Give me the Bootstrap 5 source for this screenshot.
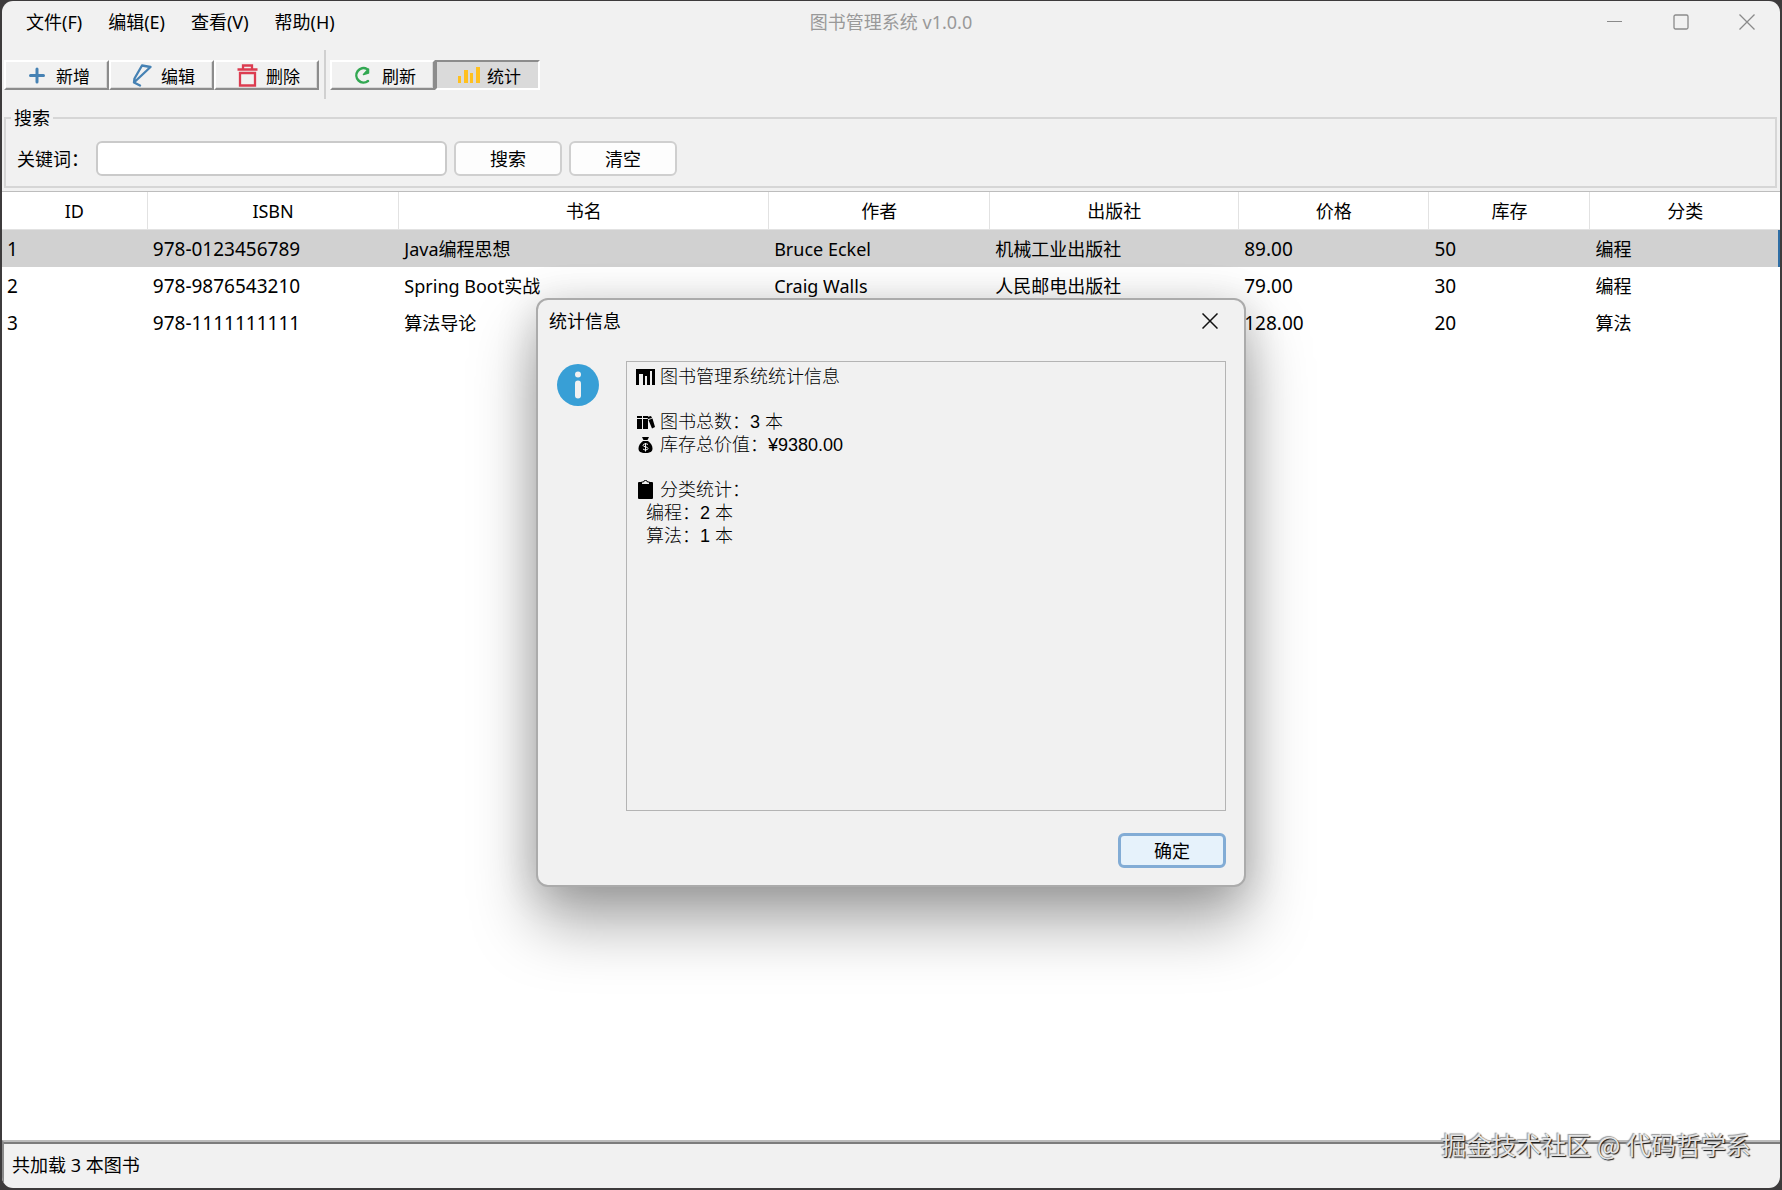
<!DOCTYPE html>
<html lang="zh-CN">
<head>
<meta charset="utf-8">
<meta name="viewport" content="width=device-width, initial-scale=1">
<title>图书管理系统 v1.0.0</title>
<link href="https://cdn.jsdelivr.net/npm/bootstrap@5.3.0/dist/css/bootstrap.min.css" rel="stylesheet">
<style>
  body { font-family: "Noto Sans", "Noto Sans CJK SC", sans-serif; font-size: 18px; line-height: 24px; color: #000; background: #3d3b3c; padding: 1px 2px 2px; }
  .app-window { background: #f1f1f1; border-radius: 11px; overflow: hidden; }
  .title-bar { height: 42px; }
  .bar-side { flex: 1 1 0; }
  .menu-links { gap: 26px; }
  .menu-links a { color: #000; text-decoration: none; }
  .menu-links a:first-child { margin-left: 24px; }
  .app-title { color: #999; }
  .win-ctl { width: 66px; height: 40px; border: 0; background: none; padding: 0; color: #8a8a8a; }
  .win-ctl svg, .dlg-close svg { display: block; margin: auto; }
  .tool-bar { height: 63px; padding: 0 2px; }
  .tool-btn { width: 105px; height: 30px; padding: 0 0 0 19px; gap: 7px; font-size: 17px; line-height: 22px; color: #000; background: #f1f1f1; border: 2px solid; border-color: #fff #8c8c8c #8c8c8c #fff; box-shadow: inset -1px -1px 0 #d8d8d8; }
  .tool-btn span { padding-top: 4px; }
  .tool-btn.pressed { background: #dadada; border-color: #8c8c8c #fff #fff #8c8c8c; box-shadow: none; }
  .tool-sep { width: 2px; height: 49px; background: #d0d0d0; margin: 0 4px 0 5px; }
  .search-box { border: 2px solid #d6d6d6; margin: 0 3px 3px 2px; padding: 11px 11px 10px; }
  .search-box legend { float: none; width: auto; font-size: 18px; line-height: 24px; margin: 0 0 0 -6px; padding: 0 3px; }
  .search-row { gap: 7px; }
  .search-row label { width: 72px; white-space: nowrap; }
  .search-row input { width: 351px; height: 35px; border: 2px solid #cacaca; border-radius: 6px; background: #fff; padding: 0 8px; }
  .plain-btn { width: 108px; height: 35px; border: 2px solid #cfcfcf; border-radius: 6px; background: #fdfdfd; padding: 0; color: #000; }
  .table-area { background: #fff; border-top: 1px solid #bdbdbd; }
  .book-grid { width: 100%; table-layout: fixed; border-collapse: separate; border-spacing: 0; }
  .book-grid th { height: 38px; padding: 0; font-weight: 400; text-align: center; border-right: 1px solid #e2e2e2; border-bottom: 1px solid #e2e2e2; }
  .book-grid th:last-child { border-right: 0; }
  .book-grid td { height: 37px; padding: 0 5px; white-space: nowrap; }
  .book-grid .num { font-size: 19px; }
  .book-grid .chosen td { background: #d1d1d1; }
  .book-grid .chosen td:last-child { border-right: 2px solid #2f6ea5; }
  .status-bar { height: 48px; border-top: 2px solid #bcbcbc; border-left: 2px solid #8a8a8a; box-shadow: inset 0 2px 0 #7c7c7c; padding: 0 8px; }
  .dlg { left: 50%; top: 298px; width: 710px; transform: translateX(-50%); background: #f1f1f1; border: 2px solid #ababab; border-radius: 12px; box-shadow: 0 36px 64px rgba(0,0,0,.34), 0 4px 40px rgba(0,0,0,.16); padding: 0 18px 17px 19px; }
  .dlg-head { height: 42px; margin-left: -8px; }
  .dlg-close { width: 32px; height: 32px; border: 0; background: none; padding: 0; }
  .dlg-body { gap: 27px; padding-top: 19px; }
  .info-mark { margin-top: 3px; }
  .info-text { height: 450px; border: 1px solid #b4b4b4; padding: 4px 9px; font-family: "Liberation Sans", "Noto Sans CJK SC", sans-serif; font-weight: 300; }
  .info-text p { height: 23px; line-height: 23px; margin: 0; display: flex; align-items: center; white-space: pre; }
  .info-text svg { margin: 0 5px 2px 0; }
  .blank-row { height: 22px; }
  .ok-btn { width: 108px; height: 35px; border: 3px solid #82acd5; border-radius: 6px; background: #e6f2fb; padding: 0; color: #000; margin-top: 22px; }
  .credit { right: 31px; bottom: 30px; font-family: "Noto Sans CJK SC", sans-serif; font-size: 25px; line-height: 32px; color: #e4e4e4; text-shadow: 1px 1px 1px #111, -1px -1px 1px #999; }
</style>
</head>
<body class="vh-100 d-flex flex-column position-relative">
<div class="app-window flex-grow-1 d-flex flex-column">
  <header class="title-bar d-flex align-items-center">
    <nav class="menu-links bar-side d-flex">
      <a href="#">文件(F)</a><a href="#">编辑(E)</a><a href="#">查看(V)</a><a href="#">帮助(H)</a>
    </nav>
    <div class="app-title">图书管理系统 v1.0.0</div>
    <div class="bar-side d-flex justify-content-end">
      <button class="win-ctl" type="button" aria-label="最小化"><svg width="16" height="16" fill="none" stroke="currentColor"><path d="M0 7.500H15"/></svg></button>
      <button class="win-ctl" type="button" aria-label="最大化"><svg width="16" height="16" fill="none" stroke="currentColor" stroke-width="1.300"><rect x="1" y="1" width="14" height="14" rx="1.500"/></svg></button>
      <button class="win-ctl" type="button" aria-label="关闭"><svg width="16" height="16" fill="none" stroke="currentColor" stroke-width="1.300"><path d="M.5.5l15 15M15.500.5l-15 15"/></svg></button>
    </div>
  </header>

  <div class="tool-bar d-flex align-items-center" role="toolbar">
    <button class="tool-btn d-flex align-items-center" type="button"><svg width="24" height="24" stroke="#4682b4" stroke-width="3" stroke-linecap="round"><path d="M12 6v13M5.500 12.500h13"/></svg><span>新增</span></button>
    <button class="tool-btn d-flex align-items-center" type="button"><svg width="24" height="24" fill="none" stroke="#4682b4" stroke-width="2.300" stroke-linejoin="round" stroke-linecap="round"><path d="M12 2.500L20.500 4 4 19.500 4.500 15.500zM4 19.500l6 3"/></svg><span>编辑</span></button>
    <button class="tool-btn d-flex align-items-center" type="button"><svg width="24" height="24" fill="none" stroke="#dc3c50" stroke-width="2.300"><path d="M2.500 6.500h20M8 6V2.500h9V6M5 10h15v12.500H5z"/></svg><span>删除</span></button>
    <div class="tool-sep"></div>
    <button class="tool-btn d-flex align-items-center" type="button"><svg width="24" height="24" fill="none" stroke="#32a852" stroke-width="2.500" stroke-linecap="round"><path d="M17 18A7.200 7.200 0 1 1 16 6"/><path d="M17.500 6v4l-5 1.500z" fill="#32a852" stroke-width="1.500" stroke-linejoin="round"/></svg><span>刷新</span></button>
    <button class="tool-btn pressed d-flex align-items-center" type="button"><svg width="24" height="24" fill="#ffc01e"><rect x="2" y="13" width="3" height="7"/><rect x="8" y="7" width="4" height="13"/><rect x="14" y="10" width="3" height="10"/><rect x="20" y="4" width="4" height="16"/></svg><span>统计</span></button>
  </div>

  <fieldset class="search-box">
    <legend>搜索</legend>
    <div class="search-row d-flex align-items-center">
      <label for="kw">关键词：</label>
      <input id="kw" type="text">
      <button class="plain-btn" type="button">搜索</button>
      <button class="plain-btn" type="button">清空</button>
    </div>
  </fieldset>

  <main class="table-area flex-grow-1">
    <table class="book-grid">
      <colgroup><col style="width:8.200%"><col style="width:14.150%"><col style="width:20.800%"><col style="width:12.440%"><col style="width:14%"><col style="width:10.700%"><col style="width:9.050%"><col></colgroup>
      <thead><tr><th>ID</th><th>ISBN</th><th>书名</th><th>作者</th><th>出版社</th><th>价格</th><th>库存</th><th>分类</th></tr></thead>
      <tbody>
        <tr class="chosen"><td class="num">1</td><td class="num">978-0123456789</td><td>Java编程思想</td><td>Bruce Eckel</td><td>机械工业出版社</td><td class="num">89.00</td><td class="num">50</td><td>编程</td></tr>
        <tr><td class="num">2</td><td class="num">978-9876543210</td><td>Spring Boot实战</td><td>Craig Walls</td><td>人民邮电出版社</td><td class="num">79.00</td><td class="num">30</td><td>编程</td></tr>
        <tr><td class="num">3</td><td class="num">978-1111111111</td><td>算法导论</td><td></td><td></td><td class="num">128.00</td><td class="num">20</td><td>算法</td></tr>
      </tbody>
    </table>
  </main>

  <footer class="status-bar d-flex align-items-center">共加载 3 本图书</footer>
</div>

<section class="dlg position-absolute" role="dialog" aria-labelledby="dlg-title">
  <div class="dlg-head d-flex align-items-center justify-content-between">
    <div id="dlg-title">统计信息</div>
    <button class="dlg-close" type="button" aria-label="关闭"><svg width="16" height="16" fill="none" stroke="#111" stroke-width="1.500"><path d="M.5.5l15 15M15.500.5l-15 15"/></svg></button>
  </div>
  <div class="dlg-body d-flex align-items-start">
    <svg class="info-mark flex-shrink-0" width="42" height="42" viewBox="0 0 42 42"><circle cx="21" cy="21" r="21" fill="#389fd6"/><circle cx="21" cy="10.500" r="3" fill="#f1f1f1"/><rect x="18" y="16.500" width="6" height="18" rx="3" fill="#f1f1f1"/></svg>
    <div class="info-text flex-grow-1">
      <p><svg width="19" height="18"><path d="M0 1h19v16h-3V3h-2v14h-3V8H9v9H7V6H3v11H0z"/></svg>图书管理系统统计信息</p>
      <div class="blank-row"></div>
      <p><svg width="19" height="18"><path d="M1 3h5v2H1zM7 3h5v2H7zM1 6h5v10H1zM7 6h5v10H7zM11 4l4-1 1 2-4 1zM12.500 7l4-1.500L19 14l-3 1.500z"/></svg>图书总数：3 本</p>
      <p><svg width="19" height="18"><path d="M6 1h7l-1.500 3h-4zM7 5h5c3 2 4.500 5 4.500 7.500 0 3-2 4.500-7 4.500s-7-1.500-7-4.500C2.500 10 4 7 7 5z"/><path d="M12 8.500c-1-1-5-1-5 .8 0 2 5 1 5 3.200 0 1.800-4 1.800-5 .5M9.500 7v8.500" fill="none" stroke="#f1f1f1"/></svg>库存总价值：¥9380.00</p>
      <div class="blank-row"></div>
      <p><svg width="19" height="20"><path d="M3 2h2v2h9V2h2q1 0 1 1v15q0 1-1 1H3q-1 0-1-1V3q0-1 1-1z"/><path d="M5.500 4V2h2q0-1.500 2-1.500t2 1.500h2v2" fill="none" stroke="#000"/></svg>分类统计：</p>
      <p>  编程：2 本</p>
      <p>  算法：1 本</p>
    </div>
  </div>
  <div class="d-flex justify-content-end"><button class="ok-btn" type="button">确定</button></div>
</section>
<div class="credit position-absolute">掘金技术社区 @ 代码哲学系</div>
<script src="https://cdn.jsdelivr.net/npm/bootstrap@5.3.0/dist/js/bootstrap.bundle.min.js"></script>
</body>
</html>
